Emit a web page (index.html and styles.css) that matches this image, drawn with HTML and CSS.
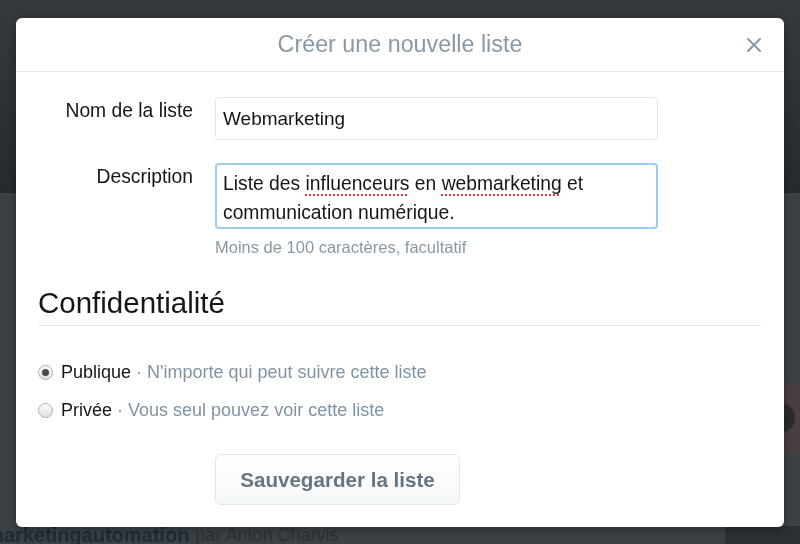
FILE: index.html
```html
<!DOCTYPE html>
<html lang="fr">
<head>
  <meta charset="UTF-8">
  <meta name="viewport" content="width=device-width, initial-scale=1.0">
  <title>Créer une nouvelle liste</title>
  <link rel="stylesheet" href="styles.css">
</head>
<body>
  <div class="page">
    <div class="page-top"></div>
    <div class="page-main">
      <div class="page-side">
        <div class="side-thumb"></div>
      </div>
      <div class="page-bottom">
        <span class="list-name">marketingautomation</span>
        <span class="list-owner">par Anton Charvis</span>
        <span class="bottom-thumb"></span>
      </div>
    </div>
  </div>

  <div class="overlay">
    <div class="modal">
      <div class="modal-header">
        <h3 class="modal-title">Créer une nouvelle liste</h3>
        <button class="close-btn" aria-label="Fermer">
          <svg width="14" height="14" viewBox="0 0 14 14">
            <path d="M1 1 L13 13 M13 1 L1 13" stroke="#8899a6" stroke-width="2" stroke-linecap="round"/>
          </svg>
        </button>
      </div>
      <div class="modal-body">
        <div class="field">
          <label class="field-label">Nom de la liste</label>
          <div class="field-control">
            <div class="input">Webmarketing</div>
          </div>
        </div>
        <div class="field field-desc">
          <label class="field-label">Description</label>
          <div class="field-control">
            <div class="textarea">
              <div class="line">Liste des <span class="misspelled">influenceurs</span> en <span class="misspelled">webmarketing</span> et</div>
              <div class="line">communication numérique.</div>
            </div>
            <div class="help">Moins de 100 caractères, facultatif</div>
          </div>
        </div>

        <h2 class="section-title">Confidentialité</h2>

        <div class="radios">
          <div class="radio-row">
            <span class="radio checked"></span>
            <span class="radio-label">Publique <span class="radio-hint">· N'importe qui peut suivre cette liste</span></span>
          </div>
          <div class="radio-row">
            <span class="radio"></span>
            <span class="radio-label">Privée <span class="radio-hint">· Vous seul pouvez voir cette liste</span></span>
          </div>
        </div>

        <div class="actions">
          <button class="save-btn">Sauvegarder la liste</button>
        </div>
      </div>
    </div>
  </div>
</body>
</html>
```

FILE: styles.css
```css
body {
  margin: 0;
  background: #3b4145;
  font-family: 'Liberation Sans', Arial, sans-serif;
  color: #14171a;
  overflow: hidden;
}
.page {
  height: 544px;
  display: flex;
  flex-direction: column;
}
.page-top {
  height: 193px;
  background: linear-gradient(180deg, #353a3e 0%, #2f3438 40%, #242a2d 100%);
}
.page-main {
  flex: 1;
  display: flex;
  flex-direction: column;
  justify-content: space-between;
}
.page-side {
  display: flex;
  justify-content: flex-end;
  padding-top: 190px;
}
.side-thumb {
  width: 40px;
  height: 70px;
  background: radial-gradient(circle at 20px 35px, #2b2b2e 0 14px, #4a3e42 16px);
}
.page-bottom {
  display: flex;
  align-items: center;
  height: 18px;
  margin-left: -14px;
  white-space: nowrap;
}
.list-name {
  font-size: 20px;
  font-weight: bold;
  color: #1e2b37;
}
.list-owner {
  font-size: 18px;
  color: #2a3035;
  margin-left: 6px;
}
.bottom-thumb {
  margin-left: auto;
  width: 75px;
  height: 18px;
  background: #2c3033;
}

/* modal */
.overlay {
  position: fixed;
  top: 0;
  left: 0;
  right: 0;
  bottom: 0;
  padding-top: 18px;
}
.modal {
  width: 768px;
  margin: 0 auto;
  background: #fff;
  border-radius: 6px;
  box-shadow: 0 2px 10px rgba(0,0,0,0.35);
}
.modal-header {
  height: 53px;
  border-bottom: 1px solid #e1e8ed;
  display: flex;
  align-items: center;
  justify-content: center;
  position: relative;
}
.modal-title {
  margin: 0;
  font-size: 23.3px;
  font-weight: normal;
  color: #8899a6;
}
.close-btn {
  position: absolute;
  right: 22px;
  top: 19px;
  width: 16px;
  height: 16px;
  padding: 1px;
  border: none;
  background: none;
  cursor: pointer;
  line-height: 0;
}
.modal-body {
  padding: 25px 23px 22px 22px;
}
.field {
  display: flex;
  gap: 22px;
}
.field-desc {
  margin-top: 23px;
}
.field-label {
  width: 155px;
  flex: none;
  text-align: right;
  font-size: 19.3px;
  line-height: 22px;
  padding-top: 3px;
  color: #14171a;
}
.field-control {
  width: 443px;
}
.input {
  box-sizing: border-box;
  height: 43px;
  border: 1px solid #e1e8ed;
  border-radius: 4px;
  padding: 0 7px;
  font-size: 19px;
  line-height: 41px;
  color: #14171a;
}
.textarea {
  box-sizing: border-box;
  height: 66px;
  border: 2px solid #9fcdf0;
  border-radius: 4px;
  padding: 4px 6px;
  font-size: 19.3px;
  line-height: 29px;
  color: #14171a;
}
.line {
  white-space: nowrap;
}
.misspelled {
  text-decoration: underline dotted #e0393e;
  text-decoration-thickness: 2px;
  text-underline-offset: 4px;
}
.help {
  margin-top: 9px;
  font-size: 16.5px;
  line-height: 19px;
  color: #8899a6;
}
.section-title {
  margin: 29px 0 0;
  padding-bottom: 5px;
  border-bottom: 1px solid #e1e8ed;
  font-size: 29.5px;
  line-height: 34px;
  font-weight: normal;
  color: #14171a;
}
.radios {
  margin-top: 27px;
}
.radio-row {
  height: 38px;
  display: flex;
  align-items: center;
  font-size: 18px;
}
.radio {
  box-sizing: border-box;
  width: 15px;
  height: 15px;
  border-radius: 50%;
  border: 1px solid #b0b0b0;
  background: linear-gradient(180deg, #fdfdfd 0%, #e0e0e0 100%);
  display: flex;
  align-items: center;
  justify-content: center;
}
.radio.checked::after {
  content: '';
  width: 7px;
  height: 7px;
  border-radius: 50%;
  background: #4a4a4a;
}
.radio-label {
  margin-left: 8px;
  color: #14171a;
}
.radio-hint {
  color: #7f93a3;
}
.actions {
  margin-top: 25px;
  padding-left: 177px;
}
.save-btn {
  width: 245px;
  height: 51px;
  border: 1px solid #e1e8ed;
  border-radius: 6px;
  background: linear-gradient(180deg, #fff 0%, #f5f8fa 100%);
  font-family: 'Liberation Sans', Arial, sans-serif;
  font-size: 20.6px;
  font-weight: bold;
  color: #66757f;
  cursor: pointer;
}
```
